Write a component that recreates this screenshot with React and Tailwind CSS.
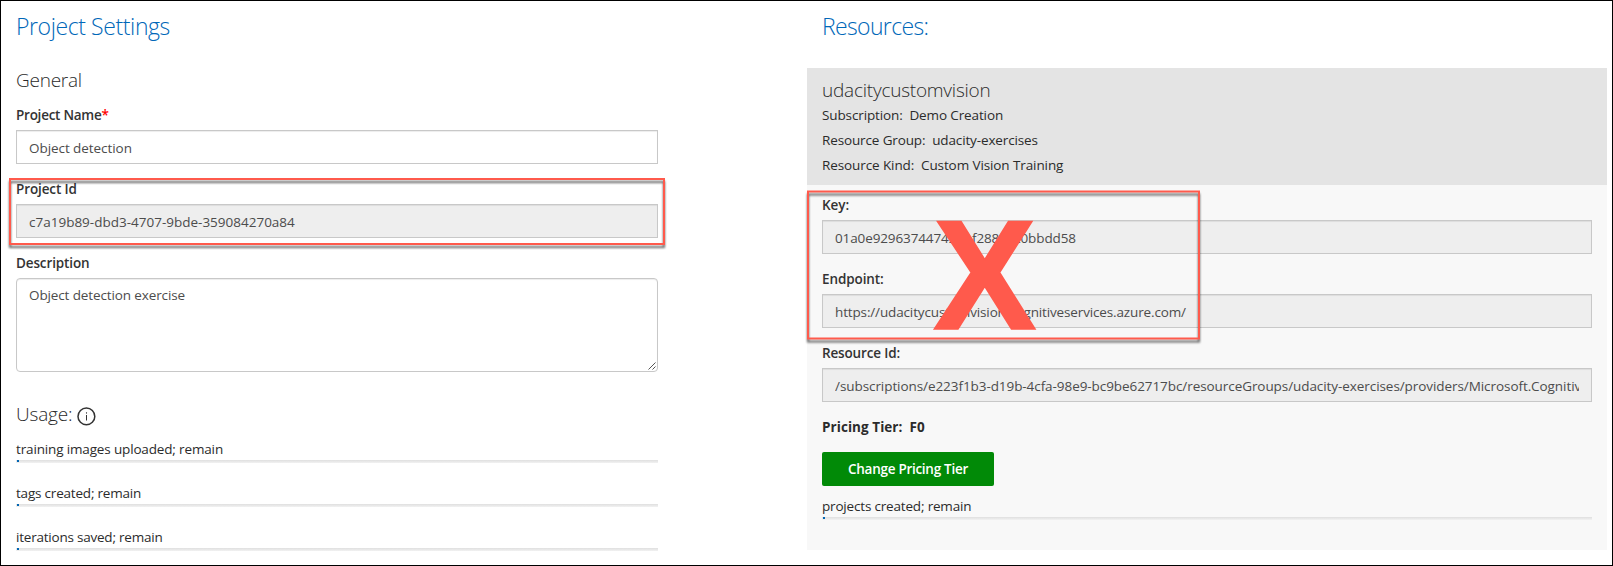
import React from "react";

const inputBase =
  "h-[34px] border border-[#c8c8c8] px-3 pt-[7px] text-[13.5px] leading-5 text-[#4c4c4c] shadow-[inset_0_1px_1px_rgba(0,0,0,0.075)]";

function Label({ children, tracking }) {
  return (
    <div className={`mb-[5px] h-5 leading-5 font-semibold text-[#333] whitespace-pre ${tracking}`}>
      {children}
    </div>
  );
}

function Field({ label, labelTracking, value, tracking, readOnly = true }) {
  return (
    <div className="mb-[15px]">
      <Label tracking={labelTracking}>{label}</Label>
      <div className={`${inputBase} ${readOnly ? "bg-[#eee]" : "bg-white"}`}>
        <div className={`overflow-hidden whitespace-nowrap ${tracking}`}>{value}</div>
      </div>
    </div>
  );
}

function Meter({ label, tracking }) {
  return (
    <div className="h-11">
      <div className={`h-5 leading-5 ${tracking}`}>{label}</div>
      <div className="mt-px flex h-[3px] pl-px bg-linear-to-b from-[#dfdfdf] to-[#f2f2f2]">
        <div className="h-[2px] w-[2px] bg-[#0065b3]" />
      </div>
    </div>
  );
}

function InfoIcon() {
  return (
    <svg className="mt-[6px] ml-[5px]" width="19" height="19" viewBox="0 0 19 19" fill="none">
      <circle cx="9.4" cy="9.4" r="8.4" stroke="#333" strokeWidth="1.5" />
      <path d="M9.5 8v5.5" stroke="#333" strokeWidth="1" />
      <path d="M9.5 5.3v1.3" stroke="#333" strokeWidth="1.1" />
    </svg>
  );
}

export default function App() {
  return (
    <div className="relative flex h-[566px] w-[1613px] overflow-hidden border border-black bg-white font-['Open_Sans','Noto_Sans',sans-serif] text-[13.5px] text-[#2b2b2b]">
      <section className="w-[657px] shrink-0 pl-[15px] pt-[9px]">
        <h1 className="h-8 text-[23px] leading-8 font-light tracking-[-0.4px] text-[#0067b8]">Project Settings</h1>
        <h2 className="mt-[25px] h-[26px] text-[19px] leading-[26px] font-light tracking-[-0.25px]">General</h2>
        <div className="mt-3">
          <Field
            label={<>Project Name<span className="text-[#f00]">*</span></>}
            labelTracking="tracking-[-0.25px]"
            value="Object detection"
            tracking="tracking-[-0.06px]"
            readOnly={false}
          />
          <Field
            label="Project Id"
            labelTracking="tracking-[-0.12px]"
            value="c7a19b89-dbd3-4707-9bde-359084270a84"
            tracking="tracking-[0px]"
          />
          <Label tracking="tracking-[-0.13px]">Description</Label>
          <div className="flex h-[94px] justify-between rounded-[4px] border border-[#c8c8c8] pl-3 pt-[6px] leading-5 text-[#4c4c4c] shadow-[inset_0_1px_1px_rgba(0,0,0,0.075)]">
            <span className="tracking-[-0.12px]">Object detection exercise</span>
            <svg className="mr-px mb-px self-end" width="8" height="8" viewBox="0 0 8 8" stroke="#555" strokeWidth="1">
              <path d="M0.5 7.5l7-7M4.5 7.5l3-3" />
            </svg>
          </div>
        </div>
        <div className="mt-[29px] flex h-[26px]">
          <h2 className="text-[19px] leading-[26px] font-light tracking-[-0.18px]">Usage:</h2>
          <InfoIcon />
        </div>
        <div className="mt-3">
          <Meter label="training images uploaded; remain" tracking="tracking-[-0.15px]" />
          <Meter label="tags created; remain" tracking="tracking-[-0.2px]" />
          <Meter label="iterations saved; remain" tracking="tracking-[-0.22px]" />
        </div>
      </section>

      <section className="ml-[149px] w-[800px] shrink-0 pt-[9px]">
        <h1 className="h-8 pl-[15px] text-[23px] leading-8 font-light tracking-[-0.65px] text-[#0067b8]">Resources:</h1>
        <div className="mt-[26px] h-[482px] bg-[#f8f8f8]">
          <div className="h-[117px] bg-[#e4e4e4] pl-[15px] pt-[9px]">
            <h2 className="h-[26px] text-[19px] leading-[26px] font-light tracking-[-0.23px]">udacitycustomvision</h2>
            <div className="mt-[2px] flex flex-col gap-[5px] leading-5 whitespace-pre">
              <div className="tracking-[-0.12px]">{"Subscription:\u00a0 Demo Creation"}</div>
              <div className="tracking-[-0.13px]">{"Resource Group:\u00a0 udacity-exercises"}</div>
              <div className="tracking-[-0.1px]">{"Resource Kind:\u00a0 Custom Vision Training"}</div>
            </div>
          </div>
          <div className="px-[15px] pt-[10px]">
            <Field label="Key:" labelTracking="tracking-[-0.04px]" value="01a0e929637447422bf288a1c0bbdd58" tracking="tracking-[-0.12px]" />
            <Field label="Endpoint:" labelTracking="tracking-[-0.1px]" value="https://udacitycustomvision.cognitiveservices.azure.com/" tracking="tracking-[-0.14px]" />
            <Field
              label="Resource Id:"
              labelTracking="tracking-[-0.15px]"
              value="/subscriptions/e223f1b3-d19b-4cfa-98e9-bc9be62717bc/resourceGroups/udacity-exercises/providers/Microsoft.CognitiveServices/accounts/udacitycustomvision"
              tracking="tracking-[-0.07px]"
            />
            <div className="h-5 leading-5 font-bold tracking-[0.06px] whitespace-pre">{"Pricing Tier:\u00a0 F0"}</div>
            <button className="mt-[15px] mb-[10px] block h-[34px] w-[172px] rounded-[2px] bg-[#018a07] leading-5 font-semibold tracking-[-0.28px] text-white">
              Change Pricing Tier
            </button>
            <Meter label="projects created; remain" tracking="tracking-[-0.18px]" />
          </div>
        </div>
      </section>

      <div className="absolute left-[8px] top-[177px] h-[67px] w-[656px] border-2 border-[#ff5a4c] drop-shadow-[0_3px_1px_rgba(0,0,0,0.6)]" />
      <svg className="absolute left-[799px] top-[184px] drop-shadow-[0_3px_1px_rgba(0,0,0,0.6)]" width="410" height="165" fill="none">
        <rect x="8" y="6.5" width="391" height="147" stroke="#ff5a4c" strokeWidth="2" />
      </svg>
      <div className="absolute left-[932px] top-[185px] font-['Liberation_Sans',Arial,sans-serif] text-[155px] leading-[180px] font-bold text-[#ff5a4c] [-webkit-text-stroke:1.5px_#ff5a4c]">X</div>
    </div>
  );
}
